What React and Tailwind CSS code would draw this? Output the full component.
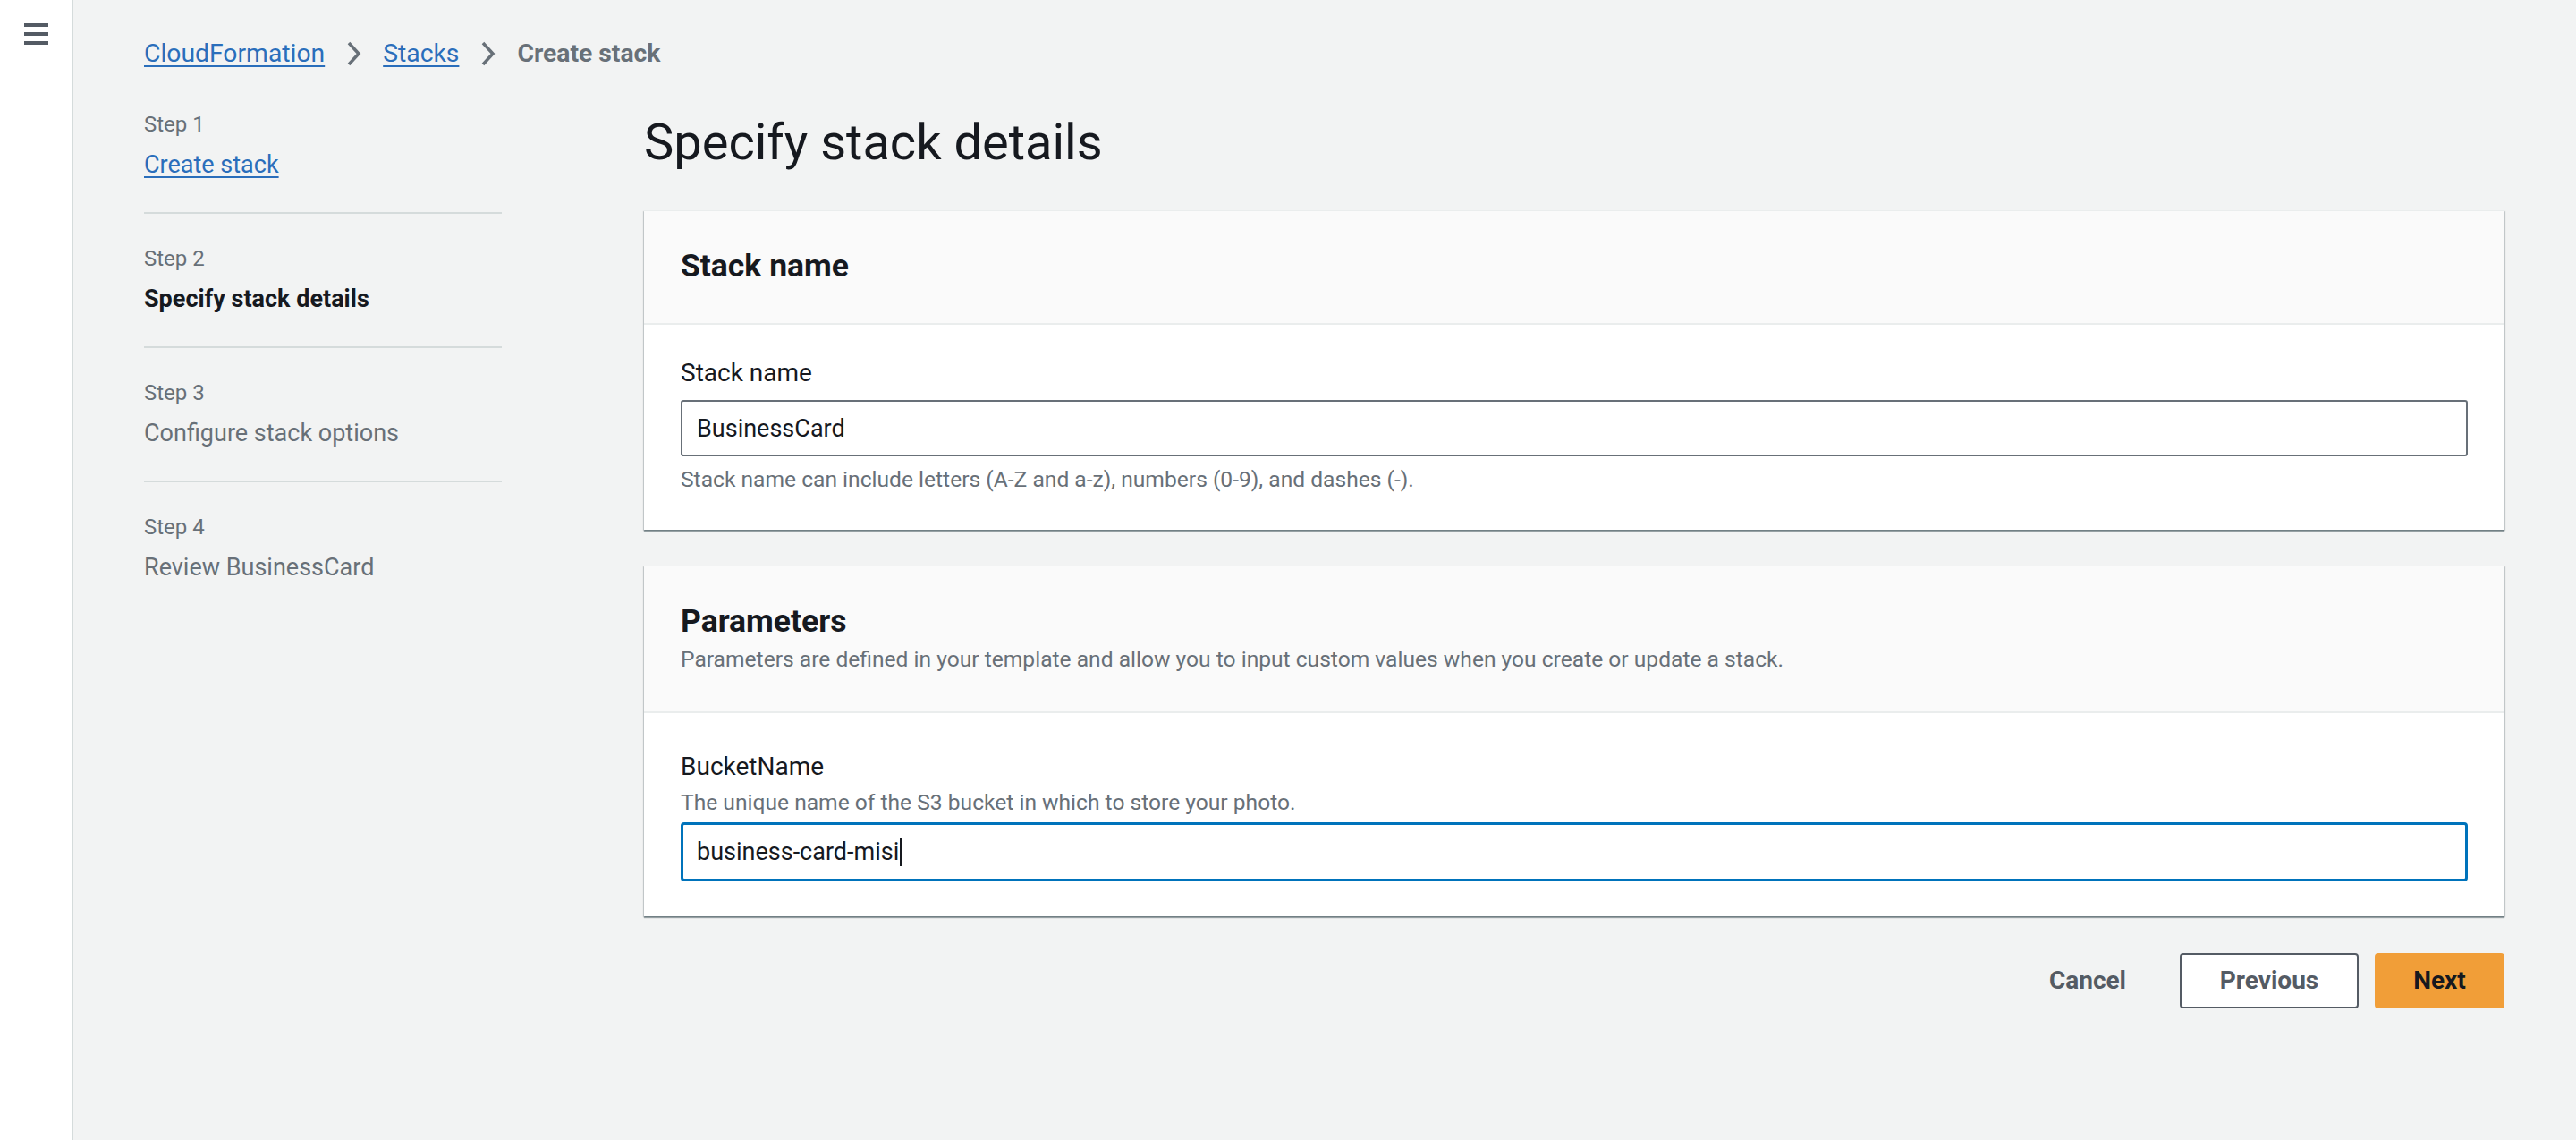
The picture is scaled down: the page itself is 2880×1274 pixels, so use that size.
import React from "react";

function Chevron() {
  return (
    <svg width="17" height="28" viewBox="0 0 17 28" className="mx-[24px] shrink-0">
      <polyline points="3,2 14,14 3,26" fill="none" stroke="#687078" strokeWidth="3.5" />
    </svg>
  );
}

function Step({ n, title, kind, first }) {
  return (
    <div className={(first ? "pt-0" : "pt-[34px] ") + " pb-[35px] border-b-2 border-[#d5dbdb]"}>
      <div className="text-[24px] leading-[32px] text-[#687078]">Step {n}</div>
      <div className="mt-[11px] text-[27px] leading-[36px]">
        {kind === "link" && <a className="text-[#2a6ebb] underline underline-offset-[4px]">{title}</a>}
        {kind === "active" && <span className="font-bold text-[#16191f]">{title}</span>}
        {kind === "muted" && <span className="text-[#687078]">{title}</span>}
      </div>
    </div>
  );
}

function Card({ children }) {
  return (
    <div className="bg-white border-t border-[#eaeded] shadow-[0_2px_1px_0_rgba(0,28,36,0.35),1px_1px_1px_0_rgba(0,28,36,0.15),-1px_1px_1px_0_rgba(0,28,36,0.15)]">
      {children}
    </div>
  );
}

export default function App() {
  return (
    <div className="flex min-h-[1274px] w-full bg-[#f2f3f3] font-['Roboto',sans-serif] text-[#16191f]">
      {/* Left rail */}
      <div className="w-[82px] shrink-0 bg-white border-r-2 border-[#d5dbdb] pt-[26px] pl-[27px]">
        <div className="flex w-[27px] flex-col gap-[6px]">
          <div className="h-[4px] bg-[#545b64]" />
          <div className="h-[4px] bg-[#545b64]" />
          <div className="h-[4px] bg-[#545b64]" />
        </div>
      </div>

      {/* Main */}
      <div className="flex-1 pl-[79px] pr-[80px]">
        {/* Breadcrumb */}
        <div className="flex h-[40px] mt-[40px] items-center text-[28.3px] leading-[40px]">
          <a className="text-[#2a6ebb] underline underline-offset-[4px]">CloudFormation</a>
          <Chevron />
          <a className="text-[#2a6ebb] underline underline-offset-[4px]">Stacks</a>
          <Chevron />
          <span className="font-bold text-[#687078]">Create stack</span>
        </div>

        <div className="flex">
          {/* Steps nav */}
          <div className="w-[400px] shrink-0 pt-[43px]">
            <Step n={1} title="Create stack" kind="link" first />
            <Step n={2} title="Specify stack details" kind="active" />
            <Step n={3} title="Configure stack options" kind="muted" />
            <div className="pt-[34px]">
              <div className="text-[24px] leading-[32px] text-[#687078]">Step 4</div>
              <div className="mt-[11px] text-[27px] leading-[36px] text-[#687078]">Review BusinessCard</div>
            </div>
          </div>

          {/* Content */}
          <div className="ml-[159px] flex-1 pt-[47px]">
            <h1 className="text-[56px] leading-[64px] font-normal text-[#16191f]">Specify stack details</h1>

            <div className="mt-[44px]">
              <Card>
                <div className="bg-[#fafafa] border-b-2 border-[#eaeded] px-[41px] pt-[39px] pb-[42px]">
                  <h2 className="text-[35.5px] leading-[44px] font-bold">Stack name</h2>
                </div>
                <div className="px-[41px] pt-[36px] pb-[40px]">
                  <div className="text-[28px] leading-[36px]">Stack name</div>
                  <div className="mt-[12px] flex h-[63px] items-center rounded-[3px] border-2 border-[#687078] bg-white pl-[16px] text-[27px] leading-[36px]">
                    BusinessCard
                  </div>
                  <div className="mt-[10px] text-[24.6px] leading-[32px] text-[#687078]">
                    Stack name can include letters (A-Z and a-z), numbers (0-9), and dashes (-).
                  </div>
                </div>
              </Card>
            </div>

            <div className="mt-[40px]">
              <Card>
                <div className="bg-[#fafafa] border-b-2 border-[#eaeded] px-[41px] pt-[39px] pb-[42px]">
                  <h2 className="text-[35.5px] leading-[44px] font-bold">Parameters</h2>
                  <div className="mt-[5px] text-[24.6px] leading-[32px] text-[#687078]">
                    Parameters are defined in your template and allow you to input custom values when you create or update a stack.
                  </div>
                </div>
                <div className="px-[41px] pt-[42px] pb-[39px]">
                  <div className="text-[28px] leading-[36px]">BucketName</div>
                  <div className="mt-[6px] text-[24.6px] leading-[32px] text-[#687078]">
                    The unique name of the S3 bucket in which to store your photo.
                  </div>
                  <div className="mt-[6px] flex h-[66px] items-center rounded-[4px] border-[3px] border-[#0073bb] bg-white pl-[15px] text-[27px] leading-[36px]">
                    <span>business-card-misi</span>
                    <span className="ml-[1px] h-[32px] w-[2px] bg-[#16191f]" />
                  </div>
                </div>
              </Card>
            </div>

            <div className="mt-[41px] flex items-center justify-end gap-[18px]">
              <button className="h-[62px] px-[42px] text-[28px] font-bold text-[#545b64]">Cancel</button>
              <button className="h-[62px] w-[200px] rounded-[4px] border-2 border-[#545b64] bg-white text-[28px] font-bold text-[#545b64]">
                Previous
              </button>
              <button className="h-[62px] w-[145px] rounded-[4px] bg-[#f19e38] text-[28px] font-bold text-[#16191f]">
                Next
              </button>
            </div>
          </div>
        </div>
      </div>
    </div>
  );
}
